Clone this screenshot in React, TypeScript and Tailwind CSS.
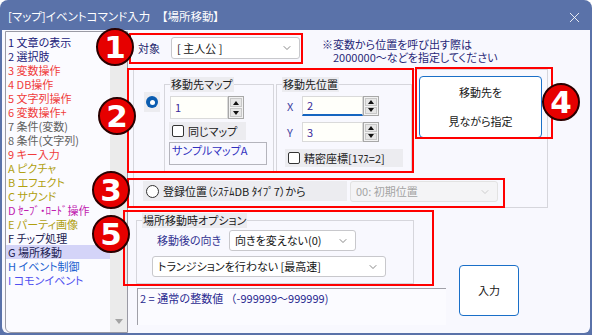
import type { ReactNode } from 'react';
import { ChevronDown, X } from 'lucide-react';

const commands = [
  { label: '1 文章の表示', color: 'text-[#22227a]' },
  { label: '2 選択肢', color: 'text-[#22227a]' },
  { label: '3 変数操作', color: 'text-[#f03c3c]' },
  { label: '4 DB操作', color: 'text-[#f03c3c]' },
  { label: '5 文字列操作', color: 'text-[#f03c3c]' },
  { label: '6 変数操作+', color: 'text-[#f03c3c]' },
  { label: '7 条件(変数)', color: 'text-[#606060]' },
  { label: '8 条件(文字列)', color: 'text-[#606060]' },
  { label: '9 キー入力', color: 'text-[#f03c3c]' },
  { label: 'A ピクチャ', color: 'text-[#b0a010]' },
  { label: 'B エフェクト', color: 'text-[#b0a010]' },
  { label: 'C サウンド', color: 'text-[#b0a010]' },
  { label: 'D ｾｰﾌﾞ・ﾛｰﾄﾞ操作', color: 'text-[#c020b0]' },
  { label: 'E パーティ画像', color: 'text-[#b0a010]' },
  { label: 'F チップ処理', color: 'text-[#202050]' },
  { label: 'G 場所移動', color: 'text-[#202050]', selected: true },
  { label: 'H イベント制御', color: 'text-[#2060d0]' },
  { label: 'I コモンイベント', color: 'text-[#5050f0]' },
];

function Group({ label, className, children }: { label: string; className: string; children: ReactNode }) {
  return (
    <div className={`relative border border-[#d6d6dc] ${className}`}>
      <span className="absolute -top-[8px] left-[5px] bg-[#ececf0] px-[1px] leading-[15px] text-[#202020]">{label}</span>
      {children}
    </div>
  );
}

function Spin({ value, inputWidth, height, focused }: { value: string; inputWidth: string; height: string; focused?: boolean }) {
  return (
    <div className={`flex ${height}`}>
      <div
        className={`flex items-center bg-[#fffffa] pl-[4px] text-[#3a2a9a] border border-[#dadada] ${inputWidth} ${
          focused ? 'border-b-2 border-b-[#1565c0]' : ''
        }`}
      >
        {value}
      </div>
      <div className="flex w-[16px] flex-col gap-[1px] border border-[#a8a8a8] bg-[#f2f2f2] p-[1px]">
        <div className="flex flex-1 items-center justify-center border border-[#c8c8c8] bg-[#e6e6e6]">
          <div className="h-0 w-0 border-x-[3px] border-b-[4px] border-x-transparent border-b-[#111]" />
        </div>
        <div className="flex flex-1 items-center justify-center border border-[#c8c8c8] bg-[#e6e6e6]">
          <div className="h-0 w-0 border-x-[3px] border-t-[4px] border-x-transparent border-t-[#111]" />
        </div>
      </div>
    </div>
  );
}

function Check({ label, className }: { label: string; className: string }) {
  return (
    <div className={`flex items-center bg-[#ececf0] pl-[3px] text-[#202020] ${className}`}>
      <div className="mr-[4px] h-[12px] w-[12px] rounded-[2px] border border-[#333] bg-white" />
      {label}
    </div>
  );
}

function Combo({ text, className, disabled }: { text: string; className: string; disabled?: boolean }) {
  return (
    <div
      className={`flex items-center rounded-[3px] border pl-[5px] pr-[6px] ${
        disabled ? 'border-[#e2e2e2] bg-[#f4f4f6] text-[#a4a4a4]' : 'border-[#c8c8cc] bg-white text-[#151515]'
      } ${className}`}
    >
      <span className="flex-1 whitespace-nowrap">{text}</span>
      <ChevronDown size={12} strokeWidth={1.4} color={disabled ? '#bbbbbb' : '#555555'} />
    </div>
  );
}

function Badge({ n, className }: { n: string; className: string }) {
  return (
    <div
      className={`absolute flex h-[38px] w-[38px] items-center justify-center rounded-full border-2 border-[#2a0000] bg-[#e60000] font-['DejaVu_Sans',sans-serif] text-[31px] leading-none font-bold text-white ${className}`}
    >
      {n}
    </div>
  );
}

export default function App() {
  return (
    <div className="relative flex h-[335px] w-[592px] flex-col overflow-hidden rounded-t-[8px] bg-[#5a72a9] font-['Noto_Sans_CJK_JP',sans-serif] text-[11px] [font-feature-settings:'palt']">
      <div className="flex h-[30px] items-center pt-[4px] pl-[8px] pr-[9px] text-[11.5px] text-white">
        <span>[マップ]イベントコマンド入力　【場所移動】</span>
        <X size={17} strokeWidth={1.2} className="ml-auto" />
      </div>

      <div className="mx-[2px] mb-[2px] flex flex-1 rounded-b-[6px] bg-[#f8f8fe]">
        {/* command list */}
        <div className="mt-[1px] ml-[3px] flex h-[302px] w-[123px] overflow-hidden rounded-bl-[6px] border border-[#9a9aa4] bg-[#fbfbff]">
          <div className="flex-1 pt-[3px]">
            {commands.map((c) => (
              <div
                key={c.label}
                className={`h-[14px] pl-[2px] leading-[14px] whitespace-nowrap ${c.color} ${c.selected ? 'bg-[#d4d4f8]' : ''}`}
              >
                {c.label}
              </div>
            ))}
          </div>
          <div className="flex w-[17px] flex-col justify-end bg-[#ebebeb] pb-[8px]">
            <div className="mx-auto h-0 w-0 border-x-[4px] border-t-[5px] border-x-transparent border-t-[#a4a4a4]" />
          </div>
        </div>

        {/* main panel */}
        <div className="flex flex-1 flex-col">
          <div className="flex h-[36px] items-center">
            <span className="ml-[10px] w-[33px] text-[#20206a]">対象</span>
            <Combo text="[ 主人公 ]" className="h-[22px] w-[129px]" />
            <div className="mt-[8px] ml-[22px] self-start leading-[13px] text-[#282878]">
              <div>※変数から位置を呼び出す際は</div>
              <div className="pl-[11px]">2000000～などを指定してください</div>
            </div>
          </div>

          <div className="mt-[3px] ml-[5px] flex h-[139px] w-[415px] flex-col border border-[#d6d6dc]">
            <div className="flex h-[102px] items-start">
              <div className="mt-[22px] ml-[10px] flex h-[20px] w-[16px] items-center justify-center bg-[#ececf0]">
                <div className="flex h-[12px] w-[12px] items-center justify-center rounded-full bg-[#0a5cb0]">
                  <div className="h-[5px] w-[5px] rounded-full bg-white" />
                </div>
              </div>
              <Group label="移動先マップ" className="mt-[14px] ml-[4px] h-[88px] w-[110px] shrink-0">
                <div className="mt-[11px] ml-[5px]">
                  <Spin value="1" inputWidth="w-[58px]" height="h-[23px]" />
                </div>
                <Check label="同じマップ" className="mt-[3px] ml-[4px] h-[18px] w-[77px]" />
                <div className="mt-[2px] ml-[4px] h-[23px] w-[98px] border border-[#b4b4bc] pl-[2px] leading-[15px] text-[#3030c0]">
                  サンプルマップA
                </div>
              </Group>
              <Group label="移動先位置" className="mt-[14px] ml-[2px] h-[88px] w-[136px] shrink-0">
                <div className="mt-[11px] flex items-center">
                  <span className="ml-[10px] w-[15px] text-[#4040a0]">X</span>
                  <Spin value="2" inputWidth="w-[61px]" height="h-[20px]" focused />
                </div>
                <div className="mt-[6px] flex items-center">
                  <span className="ml-[10px] w-[15px] text-[#4040a0]">Y</span>
                  <Spin value="3" inputWidth="w-[61px]" height="h-[20px]" />
                </div>
                <Check label="精密座標[1ﾏｽ=2]" className="mt-[7px] ml-[8px] h-[18px] w-[118px]" />
              </Group>
              <div className="mt-[6px] ml-[7px] flex h-[62px] w-[123px] shrink-0 flex-col items-center justify-center gap-[14px] rounded-[4px] border border-[#1a6fc8] bg-white text-[#151515]">
                <span className="leading-[15px]">移動先を</span>
                <span className="leading-[15px]">見ながら指定</span>
              </div>
            </div>
            <div className="mt-[9px] ml-[9px] flex items-start">
              <div className="flex h-[20px] w-[204px] items-center bg-[#ececf0] pl-[3px] text-[#202020]">
                <div className="mr-[4px] h-[13px] w-[13px] rounded-full border border-[#333] bg-white" />
                登録位置（ｼｽﾃﾑDB ﾀｲﾌﾟ7）から
              </div>
              <Combo text="00: 初期位置" className="ml-[3px] h-[21px] w-[148px]" disabled />
            </div>
          </div>

          <div className="mt-[12px] ml-[8px] flex items-start">
            <div className="flex w-[310px] flex-col">
              <Group label="場所移動時オプション" className="h-[64px] w-[278px]">
                <div className="mt-[9px] flex items-center">
                  <span className="ml-[20px] w-[72px] text-[#303090]">移動後の向き</span>
                  <Combo text="向きを変えない(0)" className="h-[21px] w-[127px]" />
                </div>
                <Combo text="トランジションを行わない [最高速]" className="mt-[5px] ml-[15px] h-[21px] w-[234px]" />
              </Group>
              <div className="mt-[4px] ml-[1px] h-[37px] w-[309px] border-t border-l border-[#a0a0a8] bg-[#fbfbff] pt-[2px] pl-[2px] leading-[14px] whitespace-pre text-[#2a2a90] [font-feature-settings:normal]">
                {'2 = 通常の整数値 （-999999～999999)'}
              </div>
            </div>
            <div className="mt-[45px] ml-[13px] flex h-[51px] w-[60px] items-center justify-center rounded-[4px] border border-[#1a6fc8] bg-white text-[#151515]">
              入力
            </div>
          </div>
        </div>
      </div>

      {/* annotations */}
      <div className="absolute top-[33px] left-[129px] h-[31px] w-[174px] border-2 border-[#ff0000]" />
      <div className="absolute top-[68px] left-[127px] h-[105px] w-[287px] border-2 border-[#ff0000]" />
      <div className="absolute top-[67px] left-[415px] h-[72px] w-[138px] border-2 border-[#ff0000]" />
      <div className="absolute top-[178px] left-[127px] h-[30px] w-[378px] border-2 border-[#ff0000]" />
      <div className="absolute top-[210px] left-[123px] h-[76px] w-[311px] border-2 border-[#ff0000]" />
      <Badge n="1" className="top-[28px] left-[96px]" />
      <Badge n="2" className="top-[97px] left-[98px]" />
      <Badge n="3" className="top-[171px] left-[92px]" />
      <Badge n="4" className="top-[83px] left-[542px]" />
      <Badge n="5" className="top-[215px] left-[92px]" />
    </div>
  );
}
